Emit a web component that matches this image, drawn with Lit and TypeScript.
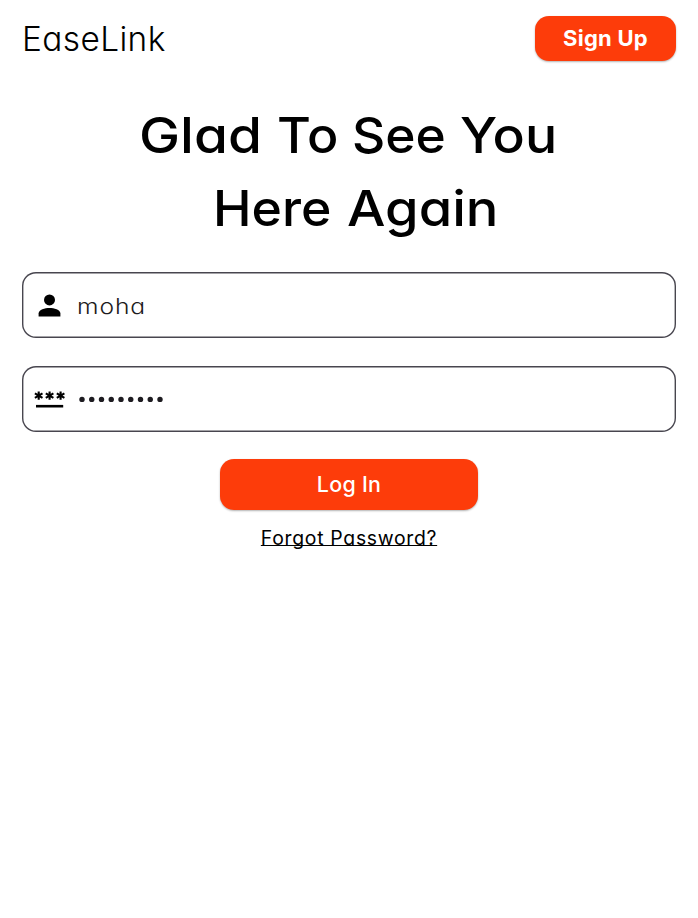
import { LitElement, html, css, svg } from "lit";
import { customElement } from "lit/decorators.js";

const star = (x: number) => svg`<g transform="translate(${x} 5.6)" stroke="#000" stroke-width="2.1">
  <path d="M0 -4.1V4.1M-3.8 -2.2L3.8 2.2M-3.8 2.2L3.8 -2.2"></path></g>`;

@customElement("app-root")
export class AppRoot extends LitElement {
  static styles = css`
    :host {
      display: block;
      min-height: 918px;
      background: #fff;
      color: #000;
      font-family: Inter, "Open Sans", sans-serif;
      font-feature-settings: "cv11" 1;
    }
    * { box-sizing: border-box; }
    header {
      display: flex;
      justify-content: space-between;
      padding: 16px 22px 0;
      height: 99px;
    }
    button {
      border: 0;
      padding: 0;
      color: #fff;
      background: #fd3c0a;
      font: inherit;
      border-radius: 14px;
      box-shadow: 0 1px 2px rgba(0, 0, 0, 0.3);
      white-space: nowrap;
    }
    .logo { font-size: 33.4px; font-weight: 360; line-height: 46px; letter-spacing: 0.4px; }
    .signup {
      width: 141px;
      height: 45px;
      padding-bottom: 1px;
      font-size: 22px;
      font-weight: 650;
      letter-spacing: 0.25px;
    }
    h1 { margin: 0; font-size: 50px; font-weight: 490; line-height: 73px; }
    .line { display: flex; white-space: pre; }
    .first { padding-left: 138.7px; }
    .second { padding-left: 212.5px; }
    .word { flex: none; transform-origin: 0 50%; }
    .glad { width: 138px; transform: scaleX(1.1); }
    .to { width: 75px; transform: scaleX(1.04); }
    .see { width: 108.5px; transform: scaleX(1.03); }
    .you { transform: scaleX(1.07); }
    .here { width: 134px; transform: scaleX(1.035); }
    .again { transform: scaleX(1.085); }
    form { display: flex; flex-direction: column; align-items: center; padding: 27.3px 22.3px 0; }
    .field {
      display: flex;
      align-items: center;
      width: 100%;
      height: 66px;
      margin-bottom: 27.5px;
      box-shadow: inset 0 0 0 1.4px #48464f;
      border-radius: 14px;
      padding-left: 10.7px;
    }
    .icon { display: block; width: 34px; height: 28px; flex: none; }
    .pin { margin-top: 11px; }
    .name {
      margin: 2px 0 0 10px;
      color: #1d1b20;
      font-size: 22px;
      font-weight: 360;
      letter-spacing: 0.8px;
      transform: scaleX(1.12);
      transform-origin: 0 50%;
    }
    .dots { display: block; width: 90px; height: 8px; margin: 1px 0 0 11px; fill: #1d1b20; }
    .login {
      width: 258px;
      height: 51px;
      padding-bottom: 2px;
      font-size: 21.4px;
      font-weight: 540;
      letter-spacing: 0.3px;
    }
    .forgot {
      margin-top: 13.5px;
      font-size: 19.4px;
      line-height: 28px;
      letter-spacing: 0.7px;
      text-decoration: underline;
      text-decoration-thickness: 1px;
      text-underline-offset: 0;
      text-decoration-skip-ink: none;
    }
  `;

  render() {
    return html`
      <header>
        <div class="logo">EaseLink</div>
        <button class="signup">Sign Up</button>
      </header>
      <h1>
        <span class="line first"><span class="word glad">Glad </span><span class="word to">To </span><span class="word see">See </span><span class="word you">You</span></span>
        <span class="line second"><span class="word here">Here </span><span class="word again">Again</span></span>
      </h1>
      <form>
        <div class="field">
          <svg class="icon" viewBox="0 0 34 28">
            <circle cx="16.5" cy="8.9" r="5.5"></circle>
            <path d="M5.6 25.4V22.4C5.6 18.6 12 16.9 16.5 16.9S27.4 18.6 27.4 22.4V25.4Z"></path>
          </svg>
          <span class="name">moha</span>
        </div>
        <div class="field">
          <svg class="icon pin" viewBox="0 0 34 28">
            ${[5.7, 16.6, 27.6].map(star)}
            <path d="M3 14.9H30.2V17.5H3Z"></path>
          </svg>
          <svg class="dots" viewBox="0 0 90 8">
            ${Array.from({ length: 9 }, (_, i) => svg`<circle cx=${4 + i * 9.75} cy="4.4" r="2.7"></circle>`)}
          </svg>
        </div>
        <button class="login" type="button">Log In</button>
        <a class="forgot">Forgot Password?</a>
      </form>
    `;
  }
}
